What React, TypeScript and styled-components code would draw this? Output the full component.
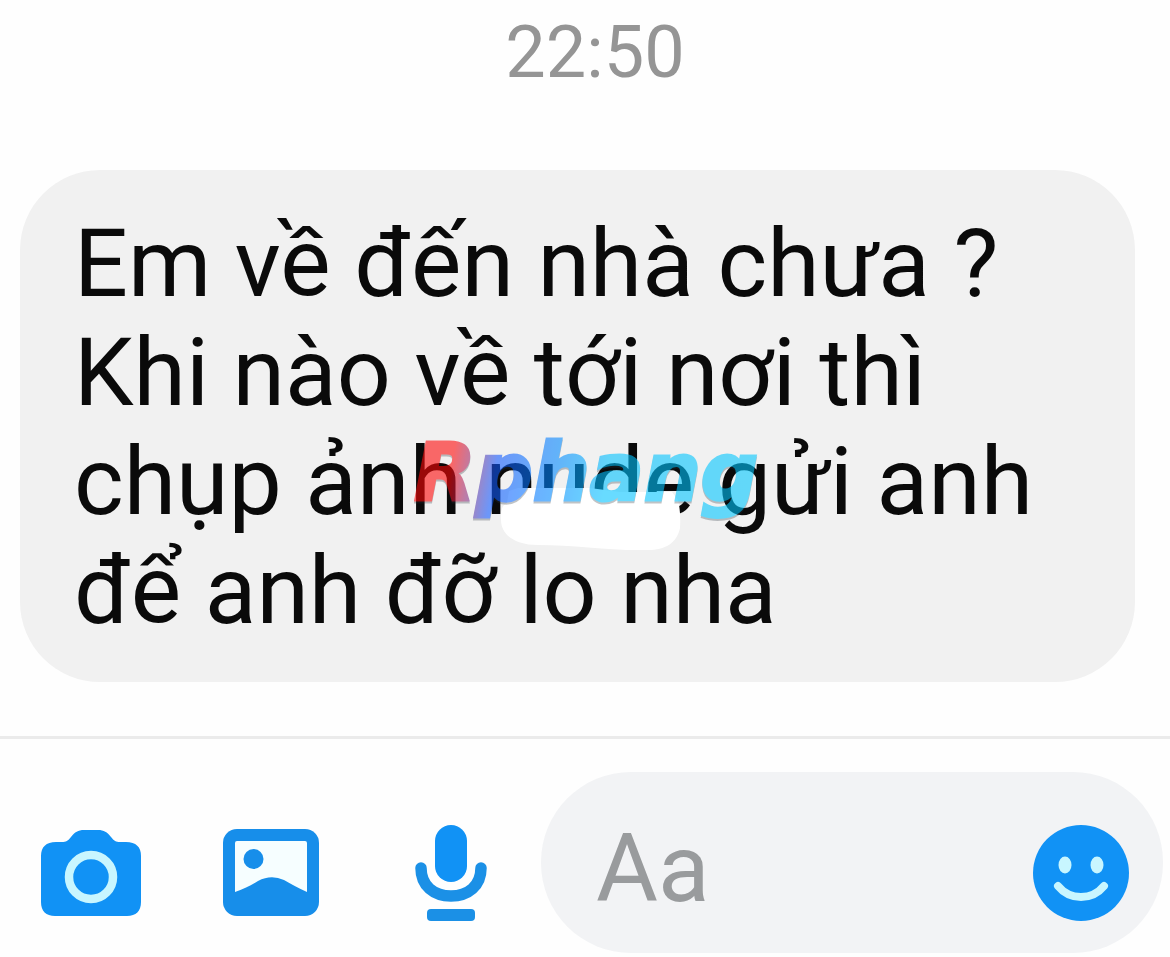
import React from "react";
import styled, { createGlobalStyle } from "styled-components";

const GlobalStyle = createGlobalStyle`
  * { box-sizing: border-box; }
  body {
    margin: 0;
    background: #fefefe;
    font-family: Roboto, "Noto Sans", sans-serif;
  }
`;

const Screen = styled.main`
  display: flex;
  flex-direction: column;
  overflow: hidden;
`;

const Timestamp = styled.time`
  padding: 9px 0 0 20px;
  text-align: center;
  font-size: 72px;
  line-height: 88px;
  color: #959595;
`;

const Bubble = styled.section`
  position: relative;
  margin: 73px 35px 54px 20px;
  padding: 39px 54px 37px;
  border-radius: 80px;
  background: #f1f1f1;
`;

const Message = styled.p`
  margin: 0;
  font-size: 95px;
  line-height: 109px;
  color: #0a0a0a;
`;

const Eraser = styled.svg`
  position: absolute;
  left: 480px;
  top: 318px;
  width: 182px;
  height: 64px;
`;

const Watermark = styled.span`
  position: absolute;
  left: 394px;
  top: 253px;
  padding-right: 12px;
  font: italic bold 80px/100px "DejaVu Sans", sans-serif;
  color: transparent;
  -webkit-text-stroke: 3px transparent;
  background: linear-gradient(
    100deg,
    #ff0808 12%,
    #1158ff 24%,
    #0088ff 40%,
    #00c2ff 54%,
    #00c8ff 100%
  );
  background-clip: text;
  -webkit-background-clip: text;
  filter: drop-shadow(0 2px 0 rgba(40, 50, 60, 0.5));
  opacity: 0.59;
`;

const Composer = styled.form`
  display: flex;
  align-items: center;
  border-top: 3px solid #ebebeb;
  padding: 33px 7px 4px 1px;
`;

const IconButton = styled.button<{ $width: number }>`
  display: flex;
  flex: 0 0 ${(p) => p.$width}px;
  justify-content: center;
  margin: 0;
  padding: 20px 0 0;
  border: 0;
  background: none;
  cursor: pointer;
`;

const Icon = styled.svg`
  width: 104px;
  height: 104px;
  flex: none;
`;

const Field = styled.div`
  display: flex;
  flex: 1;
  min-width: 0;
  align-items: center;
  height: 181px;
  padding: 0 30px 0 55px;
  border-radius: 90px;
  background: #f2f3f5;
`;

const TextInput = styled.input`
  flex: 1;
  min-width: 0;
  height: 120px;
  margin: 0;
  padding: 12px 0 0;
  border: 0;
  outline: 0;
  background: none;
  font: 95px/108px Roboto, "Noto Sans", sans-serif;
  color: #0a0a0a;
  &::placeholder {
    color: #999b9d;
    opacity: 1;
  }
`;

const blue = "#1192f5";
const pale = "#c8f6ff";

const CameraIcon = () => (
  <Icon viewBox="0 0 104 104" aria-hidden="true">
    <path
      fill={blue}
      d="M17 21h6c4 0 6-1 9-5 4-5 7-7 13-7h14c6 0 9 2 13 7 3 4 5 5 9 5h6c10 0 15 5 15 14v46c0 9-5 14-14 14H16C7 95 2 90 2 81V35c0-9 5-14 15-14z"
    />
    <circle cx="52" cy="56" r="22" fill="none" stroke={pale} strokeWidth="8.5" />
  </Icon>
);

const PhotoIcon = () => (
  <Icon viewBox="0 0 104 104" aria-hidden="true">
    <rect x="4" y="8" width="96" height="87" rx="14" fill="#178eea" />
    <path
      fill="#f6feff"
      d="M18 20h68q2 0 2 2v49C79 67 72 63 65 59Q52 53 39 60C31 65 24 68 16 71V22q0-2 2-2z"
    />
    <circle cx="34.5" cy="38" r="10" fill="#178eea" />
  </Icon>
);

const MicIcon = () => (
  <Icon viewBox="0 0 104 104" aria-hidden="true">
    <rect x="36" y="4" width="32" height="57" rx="16" fill={blue} />
    <path
      d="M22 47C22 65 35 75 52 75S82 65 82 47"
      fill="none"
      stroke="#1b90e6"
      strokeWidth="11.5"
      strokeLinecap="round"
    />
    <rect x="28" y="88" width="48" height="12" rx="4" fill="#1b90e6" />
  </Icon>
);

const SmileIcon = () => (
  <Icon viewBox="0 0 104 104" aria-hidden="true">
    <circle cx="52" cy="52" r="48" fill={blue} />
    <ellipse cx="36" cy="44" rx="6.5" ry="8.5" fill={pale} />
    <ellipse cx="68" cy="44" rx="6.5" ry="8.5" fill={pale} />
    <path
      d="M29 65Q38 76 52 76T75 65"
      fill="none"
      stroke={pale}
      strokeWidth="8"
      strokeLinecap="round"
    />
  </Icon>
);

export default function App() {
  return (
    <Screen>
      <GlobalStyle />
      <Timestamp dateTime="22:50">22:50</Timestamp>
      <Bubble>
        <Message>
          Em về đến nhà chưa ?<br />
          Khi nào về tới nơi thì
          <br />
          chụp ảnh nude gửi anh
          <br />
          để anh đỡ lo nha
        </Message>
        <Eraser viewBox="0 0 182 64" aria-hidden="true">
          <path
            fill="#ffffff"
            d="M18 0H90L120 4H172L178 12Q181 24 180 40C177 55 165 62 148 62C110 63 75 57 38 57C14 57 1 46 1 32Q0 18 7 15L9 3Z"
          />
        </Eraser>
        <Watermark>Rphang</Watermark>
      </Bubble>
      <Composer onSubmit={(e) => e.preventDefault()}>
        <IconButton type="button" $width={180} aria-label="Camera">
          <CameraIcon />
        </IconButton>
        <IconButton type="button" $width={180} aria-label="Photos">
          <PhotoIcon />
        </IconButton>
        <IconButton type="button" $width={180} aria-label="Voice">
          <MicIcon />
        </IconButton>
        <Field>
          <TextInput type="text" placeholder="Aa" aria-label="Message" />
          <IconButton type="button" $width={104} aria-label="Emoji">
            <SmileIcon />
          </IconButton>
        </Field>
      </Composer>
    </Screen>
  );
}
